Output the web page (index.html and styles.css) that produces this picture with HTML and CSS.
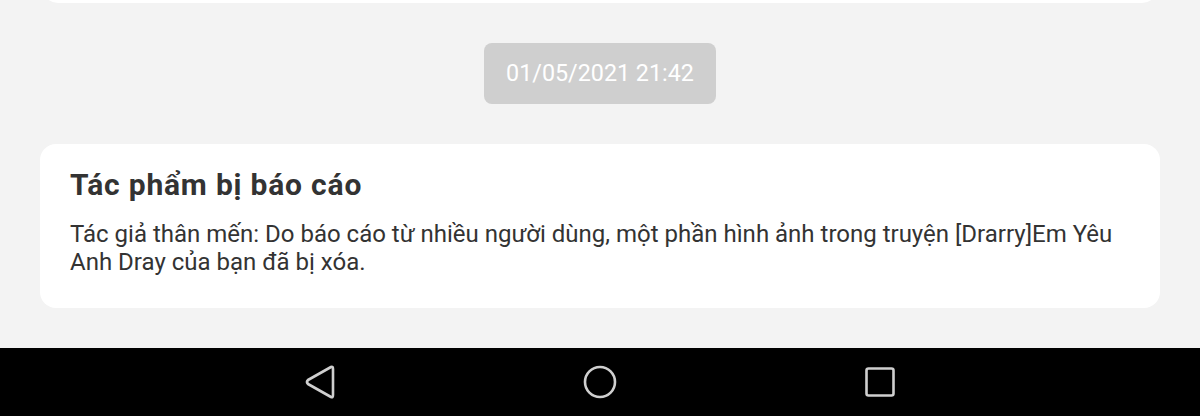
FILE: index.html
```html
<!DOCTYPE html>
<html lang="vi">
<head>
    <meta charset="UTF-8">
    <meta name="viewport" content="width=device-width, initial-scale=1.0">
    <title>Thông báo</title>
    <link rel="stylesheet" href="styles.css">
</head>
<body>
    <div class="screen">
        <div class="notice-list">
            <div class="notice-card previous"></div>

            <div class="time-row">
                <span class="time-chip">01/05/2021 21:42</span>
            </div>

            <div class="notice-card">
                <h2 class="notice-title">Tác phẩm bị báo cáo</h2>
                <p class="notice-text">Tác giả thân mến: Do báo cáo từ nhiều người dùng, một phần hình ảnh trong truyện [Drarry]Em Yêu Anh Dray của bạn đã bị xóa.</p>
            </div>
        </div>

        <div class="nav-bar">
            <svg class="nav-icon" width="40" height="40" viewBox="0 0 40 40">
                <path d="M31 5 L8 18 Q6 20 8 22 L31 35 Q33 36 33 33 L33 7 Q33 4 31 5 Z" fill="none" stroke="#cfcfcf" stroke-width="2.6" stroke-linejoin="round"/>
            </svg>
            <svg class="nav-icon" width="40" height="40" viewBox="0 0 40 40">
                <circle cx="20" cy="20" r="15" fill="none" stroke="#cfcfcf" stroke-width="2.6"/>
            </svg>
            <svg class="nav-icon" width="40" height="40" viewBox="0 0 40 40">
                <rect x="6.5" y="6.5" width="27" height="27" rx="2" fill="none" stroke="#cfcfcf" stroke-width="2.6"/>
            </svg>
        </div>
    </div>
</body>
</html>
```

FILE: styles.css
```css
* {
    margin: 0;
    padding: 0;
    box-sizing: border-box;
}

body {
    font-family: Roboto, 'Noto Sans', sans-serif;
    background-color: #f3f3f3;
    color: #333;
    overflow: hidden;
}

.screen {
    width: 1200px;
    height: 416px;
    display: flex;
    flex-direction: column;
}

.notice-list {
    flex: 1;
    padding: 0 40px;
    overflow: hidden;
}

.notice-card {
    background-color: #fff;
    border-radius: 16px;
    padding: 23px 30px 32px;
}

.notice-card.previous {
    height: 40px;
    padding: 0;
    margin-top: -37px;
    margin-left: 2px;
    margin-right: 2px;
}

.time-row {
    display: flex;
    justify-content: center;
    padding: 40px 0;
}

.time-chip {
    background-color: #cfcfcf;
    color: #fff;
    font-size: 23.3px;
    line-height: 61px;
    padding: 0 22px;
    border-radius: 8px;
}

.notice-title {
    font-size: 30px;
    font-weight: 700;
    line-height: 36px;
    letter-spacing: 0.8px;
    color: #333;
    margin-bottom: 16.5px;
}

.notice-text {
    font-size: 24px;
    line-height: 28px;
    color: #333;
}

.nav-bar {
    height: 68px;
    background-color: #000;
    display: flex;
    justify-content: center;
    align-items: center;
    gap: 240px;
}
```
